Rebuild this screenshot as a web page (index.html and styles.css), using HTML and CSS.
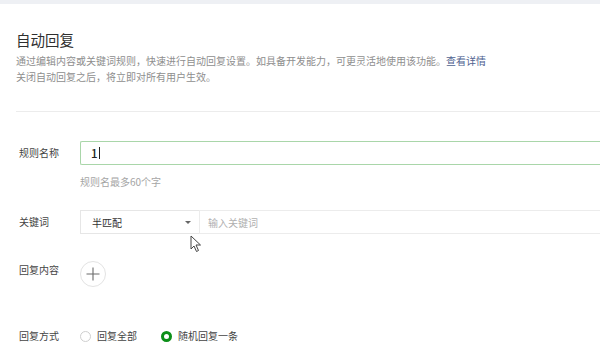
FILE: index.html
```html
<!DOCTYPE html>
<html lang="zh-CN">
<head>
<meta charset="utf-8">
<title>自动回复</title>
<link rel="stylesheet" href="styles.css">
</head>
<body>
<div class="topband"></div>
<div class="page">
  <header class="head">
    <h1 class="title">自动回复</h1>
    <p class="desc">通过编辑内容或关键词规则，快速进行自动回复设置。如具备开发能力，可更灵活地使用该功能。<a class="link" href="#">查看详情</a></p>
    <p class="desc">关闭自动回复之后，将立即对所有用户生效。</p>
  </header>
  <div class="divider"></div>
  <form class="form">
    <div class="row row-name">
      <label class="label">规则名称</label>
      <div class="control">
        <div class="input input-focus"><span class="val">1</span><span class="caret"></span></div>
        <div class="hint">规则名最多60个字</div>
      </div>
    </div>
    <div class="row row-key">
      <label class="label">关键词</label>
      <div class="control combo">
        <div class="select"><span>半匹配</span><span class="arrow"></span></div>
        <div class="kw"><span class="ph">输入关键词</span></div>
      </div>
    </div>
    <div class="row row-content">
      <label class="label label-top">回复内容</label>
      <div class="control">
        <div class="add">
          <svg width="14" height="14" viewBox="0 0 14 14"><path d="M7 0.5V13.5M0.5 7H13.5" stroke="#6a6a6a" stroke-width="1.1" fill="none"/></svg>
        </div>
      </div>
    </div>
    <div class="row row-mode">
      <label class="label">回复方式</label>
      <div class="control radios">
        <span class="radio"><span class="dot"></span>回复全部</span>
        <span class="radio on"><span class="dot"></span>随机回复一条</span>
      </div>
    </div>
  </form>
  <svg class="pointer" width="12" height="18" viewBox="0 0 12 18"><path d="M1 1 L1 14 L4 11 L6.5 16.5 L8.5 15.5 L6 10 L10.5 10 Z" fill="#fff" stroke="#444" stroke-width="1" stroke-linejoin="round"/></svg>
</div>
</body>
</html>
```

FILE: styles.css
```css
* { box-sizing: border-box; }
html, body { margin: 0; padding: 0; }
body {
  width: 600px;
  height: 356px;
  overflow: hidden;
  background: #fff;
  font-family: "Noto Sans CJK SC", "Noto Sans", sans-serif;
  color: #444;
}
.topband { height: 4px; background: #eef0f4; }
.page { position: relative; }
.head { padding: 26px 0 0 16px; }
.title {
  margin: 0;
  font-size: 14.5px;
  line-height: 20px;
  font-weight: 400;
  color: #2f2f2f;
}
.desc {
  margin: 0;
  font-size: 10px;
  line-height: 16px;
  color: #8e8e8e;
  white-space: nowrap;
}
.title + .desc { margin-top: 3px; }
.link { color: #4f6290; text-decoration: none; }
.divider {
  margin: 26px 0 0 16px;
  height: 1px;
  background: #ececec;
}
.form { padding-left: 19px; }
.row { display: flex; align-items: center; }
.label {
  width: 61px;
  flex: none;
  font-size: 10px;
  line-height: 16px;
  color: #444;
}
.control { flex: 1; min-width: 0; }
.row-name { margin-top: 29px; align-items: flex-start; }
.row-name .label { margin-top: 4px; }
.input {
  width: 100%;
  height: 24px;
  border: 1px solid #a9d6a9;
  border-right: none;
  border-radius: 2px 0 0 2px;
  display: flex;
  align-items: center;
  padding-left: 10px;
  font-size: 11.5px;
  font-weight: 500;
  color: #222;
}
.caret { width: 1px; height: 12px; background: #222; margin-left: 1px; }
.hint {
  margin-top: 9px;
  font-size: 10px;
  line-height: 16px;
  color: #a5a5a5;
}
.row-key { margin-top: 20px; }
.combo { display: flex; }
.select {
  width: 119px;
  flex: none;
  height: 24px;
  border: 1px solid #e6e6e6;
  border-right: none;
  display: flex;
  align-items: center;
  justify-content: space-between;
  padding: 0 8px 0 11px;
  font-size: 10px;
  color: #333;
}
.arrow {
  width: 0; height: 0;
  border-left: 3px solid transparent;
  border-right: 3px solid transparent;
  border-top: 3px solid #666;
}
.kw {
  flex: 1;
  height: 24px;
  border: 1px solid #ececec;
  border-right: none;
  display: flex;
  align-items: center;
  padding-left: 8px;
  font-size: 10px;
}
.ph { color: #b0b0b0; }
.row-content { margin-top: 27px; align-items: flex-start; }
.label-top { margin-top: 1px; }
.add {
  width: 26px;
  height: 26px;
  border: 1px solid #e3e3e3;
  border-radius: 50%;
  display: flex;
  align-items: center;
  justify-content: center;
}
.add svg { display: block; }
.row-mode { margin-top: 41px; }
.radios { display: flex; align-items: center; font-size: 10px; line-height: 16px; color: #444; }
.radio { display: inline-flex; align-items: center; margin-right: 24px; }
.dot {
  width: 11px;
  height: 11px;
  border-radius: 50%;
  border: 1px solid #cfcfcf;
  margin-right: 6px;
  background: #fff;
}
.radio.on .dot { border: 3px solid #0c8f18; }
.pointer { position: absolute; left: 190px; top: 231px; }
```
